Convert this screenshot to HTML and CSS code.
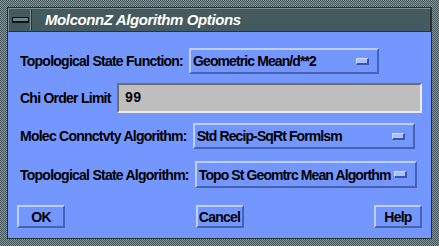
FILE: index.html
```html
<!DOCTYPE html>
<html>
<head>
<meta charset="utf-8">
<link rel="stylesheet" href="styles.css">
</head>
<body>
<div class="frame">
  <div class="inner">
    <div class="titlebar">
      <div class="menubtn"><span class="menubar"></span></div>
      <div class="title">MolconnZ Algorithm Options</div>
    </div>
    <div class="content">
      <div class="row r1">
        <span class="label">Topological State Function:</span>
        <div class="option w1"><span class="otext">Geometric Mean/d**2</span><span class="ind"></span></div>
      </div>
      <div class="row r2">
        <span class="label">Chi Order Limit</span>
        <div class="field">99</div>
      </div>
      <div class="row r3">
        <span class="label">Molec Connctvty Algorithm:</span>
        <div class="option w3"><span class="otext">Std Recip-SqRt Formlsm</span><span class="ind"></span></div>
      </div>
      <div class="row r4">
        <span class="label">Topological State Algorithm:</span>
        <div class="option w4"><span class="otext">Topo St Geomtrc Mean Algorthm</span><span class="ind"></span></div>
      </div>
      <div class="buttons">
        <div class="btn">OK</div>
        <div class="btn">Cancel</div>
        <div class="btn">Help</div>
      </div>
    </div>
  </div>
</div>
</body>
</html>
```
FILE: styles.css
```css
html, body {
  margin: 0;
  padding: 0;
  background: #56696d;
}
.frame {
  width: 439px;
  height: 246px;
  box-sizing: border-box;
  padding: 7px;
  background-color: #5d7175;
  background-image: repeating-conic-gradient(#8a9c9f 0 25%, #3e5053 0 50%);
  background-size: 2px 2px;
}
.inner {
  height: 100%;
  box-sizing: border-box;
  border: 1px solid #243234;
  display: flex;
  flex-direction: column;
}
.titlebar {
  height: 24px;
  box-sizing: border-box;
  display: flex;
  background: #455a5e;
  border-top: 1px solid #7d9093;
  border-left: 1px solid #7d9093;
  border-bottom: 1px solid #263436;
  border-right: 1px solid #263436;
}
.menubtn {
  width: 23px;
  box-sizing: border-box;
  border-right: 1px solid #263436;
  box-shadow: inset -1px 0 0 #7d9093;
  display: flex;
  align-items: center;
  justify-content: center;
}
.menubar {
  width: 15px;
  height: 3px;
  background: #6f8285;
  border: 1px solid #0c1516;
  border-bottom-width: 2px;
}
.title {
  font-family: "Liberation Sans", Arial, sans-serif;
  font-weight: bold;
  font-style: italic;
  font-size: 15px;
  letter-spacing: -0.4px;
  color: #ffffff;
  padding-left: 13px;
  line-height: 22px;
}
.content {
  flex: 1;
  background: #7397ff;
  padding: 16px 0 0 12px;
  display: flex;
  flex-direction: column;
  font-family: "Liberation Sans", Arial, sans-serif;
  font-weight: bold;
  font-size: 14px;
  letter-spacing: -0.75px;
  color: #000;
}
.row {
  display: flex;
  align-items: center;
  gap: 6px;
}
.r1 { height: 26px; }
.r2 { height: 30px; margin-top: 9px; }
.r3 { height: 26px; margin-top: 10px; }
.r4 { height: 27px; margin-top: 12px; }
.label {
  white-space: nowrap;
}
.option {
  height: 100%;
  box-sizing: border-box;
  display: flex;
  align-items: center;
  justify-content: space-between;
  padding: 0 8px 0 2px;
  border-top: 2px solid #bccfff;
  border-left: 2px solid #bccfff;
  border-bottom: 2px solid #4861b0;
  border-right: 2px solid #4861b0;
  white-space: nowrap;
  letter-spacing: -0.9px;
}
.w1 { width: 190px; }
.w3 { width: 222px; }
.w4 { width: 222px; }
.ind {
  width: 13px;
  height: 7px;
  flex: none;
  box-sizing: border-box;
  border-top: 1px solid #d4e0ff;
  border-left: 1px solid #d4e0ff;
  border-bottom: 2px solid #3b54a6;
  border-right: 2px solid #3b54a6;
  background: #a9bfff;
}
.field {
  width: 305px;
  height: 100%;
  box-sizing: border-box;
  background: #bebebe;
  border-top: 2px solid #6e6e6e;
  border-left: 2px solid #6e6e6e;
  border-bottom: 2px solid #ececec;
  border-right: 2px solid #ececec;
  font-family: "Liberation Mono", monospace;
  font-weight: bold;
  font-size: 14px;
  letter-spacing: 0;
  padding-left: 6px;
  display: flex;
  align-items: center;
}
.buttons {
  display: flex;
  justify-content: space-between;
  margin: 17px 0 0 -3px;
  padding: 0 9px 0 0;
}
.btn {
  width: 48px;
  height: 23px;
  box-sizing: border-box;
  border-top: 2px solid #bccfff;
  border-left: 2px solid #bccfff;
  border-bottom: 2px solid #4861b0;
  border-right: 2px solid #4861b0;
  display: flex;
  align-items: center;
  justify-content: center;
}
```
